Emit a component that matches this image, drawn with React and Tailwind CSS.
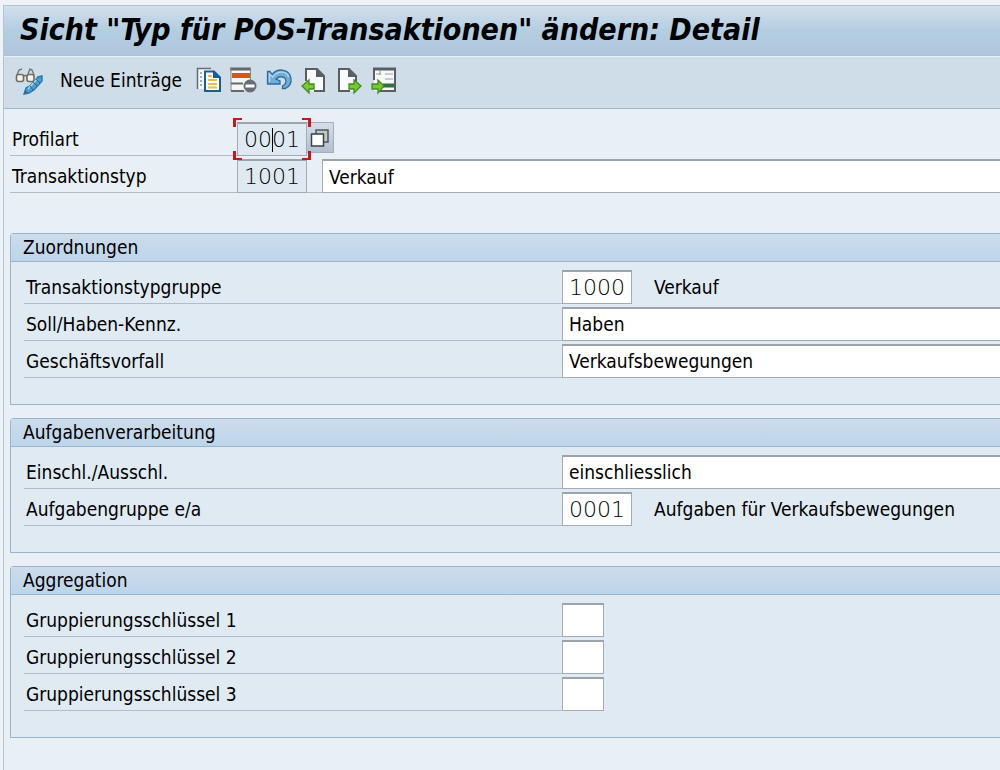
import { useState } from 'react'

const fieldBorder = 'border border-[#a3acb4] border-t-2 border-t-[#9ba4ab] outline-none text-black'
const codeFont = "font-['DejaVu_Sans'] font-extralight text-[22px] leading-6"

function DisplayChangeIcon() {
  return (
    <svg width="30" height="28" viewBox="0 0 30 28" fill="none">
      <path d="m3 8 2-5 3-1M14 7l2-5 2 1 2 5" stroke="#77756f" strokeWidth="1.4" />
      <rect x="2.5" y="7.500" width="7" height="7" rx="2" fill="#f5f3ec" stroke="#6e6b65" strokeWidth="1.600" />
      <rect x="13" y="7.500" width="7" height="7" rx="2" fill="#f5f3ec" stroke="#6e6b65" strokeWidth="1.600" />
      <path d="M9.500 9.500c1-1.500 2.500-1.500 3.500 0" stroke="#6e6b65" strokeWidth="1.400" />
      <path d="m10 27 2-6 4-2 8-9 4-1v5l-8 9-5 3z" fill="#4f9bc9" stroke="#287baf" strokeWidth="1.400" />
      <path d="m14 22 9-10" stroke="#a5d5ee" strokeWidth="1.500" />
      <path d="m22 12 4 4M19 15l4 4M16 19l3 4" stroke="#23658f" />
      <path d="m10 27 1-4 3 3z" fill="#286b93" />
    </svg>
  )
}

function CopyIcon() {
  return (
    <svg width="26" height="28" viewBox="0 0 26 28" fill="none">
      <path d="M2 2h13v20H2z" fill="#f3f6f8" />
      <path d="M1.500 22V1.500H15" stroke="#666b70" strokeWidth="1.500" />
      <path d="M4 6h2M4 10h2M4 14h2M4 18h2" stroke="#8e9499" strokeWidth="1.500" />
      <path d="M9 4.500h9l6 6V24H9z" fill="#fff" stroke="#16608f" strokeWidth="2" />
      <path d="M17 4v7h7z" fill="#16608f" />
      <path d="M12 9h4M12 13h9M12 17h9M12 20.500h9" stroke="#f2bd3a" strokeWidth="2" />
    </svg>
  )
}

function DeleteRowIcon() {
  return (
    <svg width="28" height="28" viewBox="0 0 28 28" fill="none">
      <path d="M1 1h20v23H1z" fill="#f4f5f5" />
      <path d="M0 2h21" stroke="#64686b" strokeWidth="3" />
      <path d="M1 1v23M20.500 1v12" stroke="#85898c" />
      <path d="M2 6h18v5H2z" fill="#d9541e" />
      <path d="M1 16.500h12M1 24h13" stroke="#64686b" strokeWidth="2" />
      <circle cx="20" cy="19" r="6.500" fill="#686d71" />
      <path d="M15.500 19h9" stroke="#fff" strokeWidth="3" />
    </svg>
  )
}

function UndoIcon() {
  return (
    <svg width="27" height="28" viewBox="0 0 27 28" fill="none">
      <path
        d="M1.500 4.500v12.500H14V14l-4-2c3-3 8-3 9.500 0 1.200 3 0 5.500-3 7v2.500h3c4-2 6-6 5.500-10C24 2.500 12 0 6 7.500l-2-3z"
        fill="#72aed4"
        stroke="#2b6f9f"
        strokeWidth="1.300"
      />
      <path d="M3.500 15V7l3 3C12 3 21 4 22.500 10" stroke="#b5d8ed" strokeWidth="1.300" />
    </svg>
  )
}

function PreviousEntryIcon() {
  return (
    <svg width="28" height="28" viewBox="0 0 28 28" fill="none">
      <path d="M5 2h11l7 7v15H5z" fill="#fafbfb" />
      <path d="M5 14V2h11l7 7v15H13" stroke="#595e62" strokeWidth="2" />
      <path d="M15 2v8h8z" fill="#595e62" />
      <path d="m1 19 7-6v4h5v5H8v4z" fill="#78c832" stroke="#3f8d20" strokeWidth="1.300" />
    </svg>
  )
}

function NextEntryIcon() {
  return (
    <svg width="26" height="28" viewBox="0 0 26 28" fill="none">
      <path d="M2 2h10l7 7v15H2z" fill="#fafbfb" />
      <path d="M13 24H2V2h10l7 7v6" stroke="#595e62" strokeWidth="2" />
      <path d="M11 2v8h8z" fill="#595e62" />
      <path d="m24 19-7-6v4h-5v5h5v4z" fill="#78c832" stroke="#3f8d20" strokeWidth="1.300" />
    </svg>
  )
}

function OtherEntryIcon() {
  return (
    <svg width="26" height="28" viewBox="0 0 26 28" fill="none">
      <path d="M3 2h21v22H3z" fill="#f7f8f8" />
      <path d="M3 13V2M24 1v24M9 24h15" stroke="#595e62" strokeWidth="2" />
      <path d="M2 2h23" stroke="#595e62" strokeWidth="3" />
      <path d="M9 3v5M5 7h5M14 7h8M14 12h8" stroke="#999ea2" strokeWidth="1.200" />
      <path d="M12 18.500h11" stroke="#2c7047" strokeWidth="4" />
      <path d="m13 19-6-6v4H1v5h6v4z" fill="#78c832" stroke="#3f8d20" strokeWidth="1.300" />
    </svg>
  )
}

function ValueHelpIcon() {
  return (
    <svg width="20" height="20" viewBox="0 0 20 20" fill="none">
      <path d="M6 2h12v12H6z" fill="#c3c8c5" stroke="#50575d" strokeWidth="1.500" />
      <path d="M1.500 6h12v12h-12z" fill="#fff" stroke="#3c4247" strokeWidth="1.500" />
    </svg>
  )
}

function FocusCorners() {
  const corner = 'pointer-events-none absolute size-[9px] border-[#cb1420]'
  return (
    <>
      <span className={`${corner} -top-1 -left-1 border-t-2 border-l-3`} />
      <span className={`${corner} -top-1 -right-1 border-t-2 border-r-3`} />
      <span className={`${corner} -bottom-1 -left-1 border-b-2 border-l-3`} />
      <span className={`${corner} -right-1 -bottom-1 border-r-3 border-b-2`} />
    </>
  )
}

function CodeInput({ className, ...props }) {
  return <input type="text" className={`h-[34px] shrink-0 px-1.5 ${fieldBorder} ${codeFont} ${className}`} {...props} />
}

function Row({ id, label, labelWidth = 'w-[538px]', children }) {
  return (
    <div className="flex h-[34px]">
      <label htmlFor={id} className={`${labelWidth} shrink-0 border-b border-[#b0bcc7] pt-1 pl-0.5 leading-[26px]`}>
        {label}
      </label>
      {children}
    </div>
  )
}

function Choice({ id, options }) {
  return (
    <select id={id} className={`h-[34px] min-w-0 flex-1 appearance-none border-r-0 bg-white px-1.5 ${fieldBorder}`}>
      {options.map((option) => (
        <option key={option}>{option}</option>
      ))}
    </select>
  )
}

function Group({ title, children }) {
  return (
    <section className="rounded-tl-sm border border-r-0 border-[#9bb4cb] bg-[#dfeaf3]">
      <h2 className="h-7 border-b border-[#9bb4cb] bg-linear-to-b from-[#ccdceb] to-[#bdd5ea] pl-3 leading-[26px]">
        {title}
      </h2>
      <div className="flex flex-col gap-[3px] pt-2 pb-[26px] pl-[13px]">{children}</div>
    </section>
  )
}

const tools = [
  { label: 'Kopieren als...', Icon: CopyIcon },
  { label: 'Löschen', Icon: DeleteRowIcon },
  { label: 'Änderung zurücknehmen', Icon: UndoIcon },
  { label: 'Voriger Eintrag', Icon: PreviousEntryIcon },
  { label: 'Nächster Eintrag', Icon: NextEntryIcon },
  { label: 'Anderer Eintrag', Icon: OtherEntryIcon },
]

function App() {
  const [form, setForm] = useState({
    profile: '0001',
    type: '1001',
    typeName: 'Verkauf',
    typeGroup: '1000',
    taskGroup: '0001',
    key1: '',
    key2: '',
    key3: '',
  })

  const bind = (name) => ({
    id: name,
    value: form[name],
    onChange: (e) => setForm({ ...form, [name]: e.target.value }),
  })

  return (
    <div className="min-h-screen overflow-hidden bg-[#edf3f7] pt-[5px] pl-[3px] font-['DejaVu_Sans_Condensed','DejaVu_Sans',sans-serif] text-[19px] text-black">
      <div className="min-h-[calc(100vh-5px)] border-t border-l border-[#b3c3d0] bg-[#e9f0f5]">
        <header>
          <h1 className="h-[50px] border-b border-[#b0bfce] bg-linear-to-b from-[#d3dfed] via-[#b3cee0] to-[#b0c5de] pl-4 text-[30px] leading-[48px] font-bold whitespace-nowrap italic">
            Sicht "Typ für POS-Transaktionen" ändern: Detail
          </h1>
          <div className="flex h-[53px] items-center border-t border-b border-t-[#e9f2f8] border-b-[#a3b8c7] bg-[#cfdde8] pb-1 pl-2.5">
            <button type="button" aria-label="Anzeigen/Ändern">
              <DisplayChangeIcon />
            </button>
            <button type="button" className="ml-4 whitespace-nowrap">Neue Einträge</button>
            <div className="ml-3.5 flex gap-2">
              {tools.map(({ label, Icon }) => (
                <button key={label} type="button" aria-label={label}>
                  <Icon />
                </button>
              ))}
            </div>
          </div>
        </header>

        <main className="pl-1.5">
          <div className="flex flex-col gap-[3px] pt-[13px] pb-10">
            <Row id="profile" label="Profilart" labelWidth="w-[227px]">
              <div className="relative">
                <CodeInput {...bind('profile')} className="w-[70px] bg-[#dfe9f2]" />
                <span className="pointer-events-none absolute top-1.5 left-[35px] h-6 w-px bg-black" />
                <FocusCorners />
              </div>
              <button
                type="button"
                aria-label="Eingabehilfe"
                className="flex h-[31px] w-[27px] items-center justify-center border border-l-0 border-[#a3afbd] bg-linear-to-b from-[#d4dfeb] to-[#b1bfd2]"
              >
                <ValueHelpIcon />
              </button>
            </Row>
            <Row id="type" label="Transaktionstyp" labelWidth="w-[227px]">
              <CodeInput {...bind('type')} className="w-[70px] bg-[#dfe9f2]" />
              <span className="w-[15px] shrink-0 border-b border-[#b0bcc7]" />
              <input
                type="text"
                aria-label="Bezeichnung"
                {...bind('typeName')}
                className={`h-[34px] min-w-0 flex-1 border-r-0 bg-white px-1.5 ${fieldBorder}`}
              />
            </Row>
          </div>

          <div className="flex flex-col gap-[13px]">
            <Group title="Zuordnungen">
              <Row id="typeGroup" label="Transaktionstypgruppe">
                <CodeInput {...bind('typeGroup')} className="w-[70px] bg-white" />
                <span className="ml-[22px] pt-1 leading-[26px]">Verkauf</span>
              </Row>
              <Row id="debitCredit" label="Soll/Haben-Kennz.">
                <Choice id="debitCredit" options={['Haben', 'Soll']} />
              </Row>
              <Row id="transaction" label="Geschäftsvorfall">
                <Choice id="transaction" options={['Verkaufsbewegungen']} />
              </Row>
            </Group>

            <Group title="Aufgabenverarbeitung">
              <Row id="inclusion" label="Einschl./Ausschl.">
                <Choice id="inclusion" options={['einschliesslich', 'ausschliesslich']} />
              </Row>
              <Row id="taskGroup" label="Aufgabengruppe e/a">
                <CodeInput {...bind('taskGroup')} className="w-[70px] bg-white" />
                <span className="ml-[22px] pt-1 leading-[26px] whitespace-nowrap">Aufgaben für Verkaufsbewegungen</span>
              </Row>
            </Group>

            <Group title="Aggregation">
              <Row id="key1" label="Gruppierungsschlüssel 1">
                <CodeInput {...bind('key1')} className="w-[42px] bg-white" />
              </Row>
              <Row id="key2" label="Gruppierungsschlüssel 2">
                <CodeInput {...bind('key2')} className="w-[42px] bg-white" />
              </Row>
              <Row id="key3" label="Gruppierungsschlüssel 3">
                <CodeInput {...bind('key3')} className="w-[42px] bg-white" />
              </Row>
            </Group>
          </div>
        </main>
      </div>
    </div>
  )
}

export default App
